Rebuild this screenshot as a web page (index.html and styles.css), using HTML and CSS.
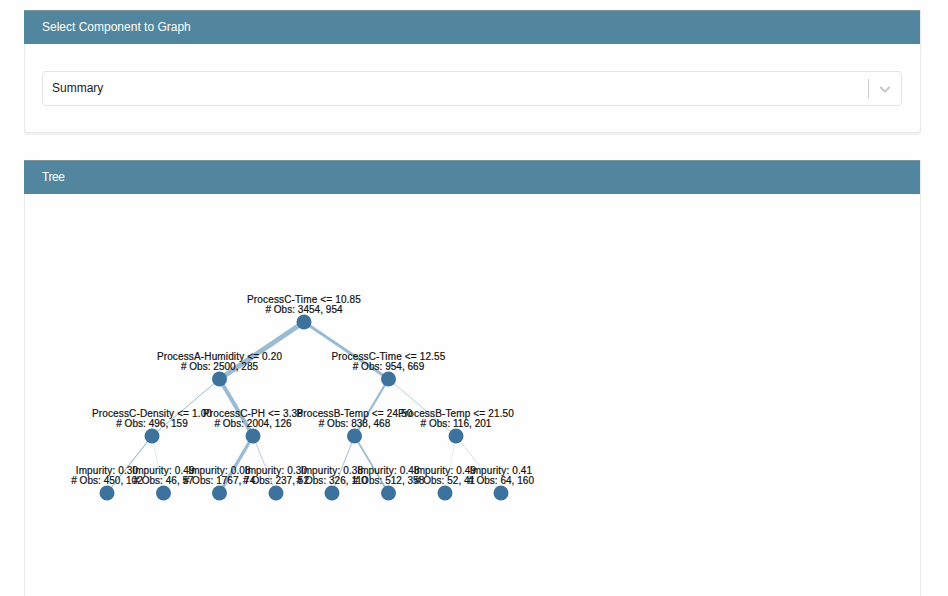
FILE: index.html
```html
<!DOCTYPE html>
<html lang="en">
<head>
<meta charset="utf-8">
<title>Tree</title>
<link rel="stylesheet" href="styles.css">
</head>
<body>
<main class="page">
  <section class="card select-card">
    <header class="card-header">Select Component to Graph</header>
    <div class="card-body">
      <div class="select">
        <span class="select-value">Summary</span>
        <span class="select-separator"></span>
        <span class="select-indicator">
          <svg width="18" height="18" viewBox="0 0 20 20"><path d="M4.516 7.548c0.436-0.446 1.043-0.481 1.576 0l3.908 3.747 3.908-3.747c0.533-0.481 1.141-0.446 1.574 0 0.436 0.445 0.408 1.197 0 1.615-0.406 0.418-4.695 4.502-4.695 4.502-0.217 0.223-0.502 0.335-0.787 0.335s-0.57-0.112-0.789-0.335c0 0-4.287-4.084-4.695-4.502s-0.436-1.17 0-1.615z"/></svg>
        </span>
      </div>
    </div>
  </section>
  <section class="card tree-card">
    <header class="card-header tree-header">Tree</header>
    <svg class="tree" width="895" height="402" viewBox="25 194 895 402">
      <g class="links">
        <path d="M304 322L219.5 379" stroke-width="5"/>
        <path d="M304 322L388.5 379" stroke-width="3"/>
        <path d="M219.5 379L152 436" stroke-width="1"/>
        <path d="M219.5 379L253 436" stroke-width="4"/>
        <path d="M388.5 379L354.5 436" stroke-width="2.3"/>
        <path d="M388.5 379L456 436" stroke-width=".7"/>
        <path d="M152 436L107 493" stroke-width="1.1"/>
        <path d="M152 436L163.5 493" stroke-width=".3"/>
        <path d="M253 436L219.5 493" stroke-width="3.4"/>
        <path d="M253 436L276 493" stroke-width=".7"/>
        <path d="M354.5 436L332 493" stroke-width=".9"/>
        <path d="M354.5 436L388.5 493" stroke-width="1.7"/>
        <path class="dotted" d="M456 436L445 493" stroke-width=".4"/>
        <path class="dotted" d="M456 436L501 493" stroke-width=".6"/>
      </g>
      <g class="nodes">
        <circle cx="304" cy="322" r="7.5"/>
        <circle cx="219.5" cy="379" r="7.5"/><circle cx="388.5" cy="379" r="7.5"/>
        <circle cx="152" cy="436" r="7.5"/><circle cx="253" cy="436" r="7.5"/><circle cx="354.5" cy="436" r="7.5"/><circle cx="456" cy="436" r="7.5"/>
        <circle cx="107" cy="493" r="7.5"/><circle cx="163.5" cy="493" r="7.5"/><circle cx="219.5" cy="493" r="7.5"/><circle cx="276" cy="493" r="7.5"/><circle cx="332" cy="493" r="7.5"/><circle cx="388.5" cy="493" r="7.5"/><circle cx="445" cy="493" r="7.5"/><circle cx="501" cy="493" r="7.5"/>
      </g>
      <g class="labels rule">
        <text x="304" y="303">ProcessC-Time &lt;= 10.85</text>
        <text x="219.5" y="360">ProcessA-Humidity &lt;= 0.20</text>
        <text x="388.5" y="360">ProcessC-Time &lt;= 12.55</text>
        <text x="152" y="417">ProcessC-Density &lt;= 1.00</text>
        <text x="253" y="417">ProcessC-PH &lt;= 3.38</text>
        <text x="354.5" y="417">ProcessB-Temp &lt;= 24.50</text>
        <text x="456" y="417">ProcessB-Temp &lt;= 21.50</text>
        <text x="107" y="474">Impurity: 0.30</text>
        <text x="163.5" y="474">Impurity: 0.49</text>
        <text x="219.5" y="474">Impurity: 0.08</text>
        <text x="276" y="474">Impurity: 0.30</text>
        <text x="332" y="474">Impurity: 0.38</text>
        <text x="388.5" y="474">Impurity: 0.48</text>
        <text x="445" y="474">Impurity: 0.49</text>
        <text x="501" y="474">Impurity: 0.41</text>
      </g>
      <g class="labels count">
        <text x="304" y="313"># Obs: 3454, 954</text>
        <text x="219.5" y="370"># Obs: 2500, 285</text>
        <text x="388.5" y="370"># Obs: 954, 669</text>
        <text x="152" y="427"># Obs: 496, 159</text>
        <text x="253" y="427"># Obs: 2004, 126</text>
        <text x="354.5" y="427"># Obs: 838, 468</text>
        <text x="456" y="427"># Obs: 116, 201</text>
        <text x="107" y="484"># Obs: 450, 102</text>
        <text x="163.5" y="484"># Obs: 46, 57</text>
        <text x="219.5" y="484"># Obs: 1767, 74</text>
        <text x="276" y="484"># Obs: 237, 52</text>
        <text x="332" y="484"># Obs: 326, 110</text>
        <text x="388.5" y="484"># Obs: 512, 358</text>
        <text x="445" y="484"># Obs: 52, 41</text>
        <text x="501" y="484"># Obs: 64, 160</text>
      </g>
    </svg>
  </section>
</main>
</body>
</html>
```
FILE: styles.css
```css
* { box-sizing: border-box; }
html, body { margin: 0; height: 100%; overflow: hidden; }
body {
  background: #fefefe;
  color: #222;
  font: 12px/16px "Liberation Sans", Arial, sans-serif;
}
.page {
  display: flex;
  flex-direction: column;
  gap: 27px;
  height: 596px;
  padding: 10px 27px 0 24px;
  overflow: hidden;
}
.card {
  flex: none;
  border: 1px solid #e6eaec;
  border-top: 0;
  border-radius: 0 0 3px 3px;
  background: #fefefe;
  box-shadow: 0 2px 0 #f1f1f1;
}
.select-card { height: 123px; }
.tree-card { height: 460px; }
.card-header {
  height: 34px;
  margin: 0 0 0 -1px;
  padding: 8px 18px 0;
  border-top: 1px solid #7e929b;
  background: #51869e;
  color: #fff;
}
.tree-header { letter-spacing: -.4px; }
.card-body { padding: 27px 18px 0 17px; }
.select {
  display: flex;
  align-items: center;
  height: 35px;
  border: 1px solid #e5e5e5;
  border-radius: 4px;
}
.select-value { flex: 1; padding: 0 0 1px 9px; }
.select-separator { width: 1px; height: 19px; background: #ccc; }
.select-indicator { display: flex; justify-content: center; width: 32px; }
.select-indicator svg { fill: #c8c8c8; }
.tree { display: block; }
.links path { fill: none; stroke: #9abbd2; }
.links .dotted { stroke-dasharray: 2 1; }
.nodes circle { fill: #3c729b; }
.labels text {
  fill: #111;
  stroke: #111;
  stroke-width: .2px;
  font-size: 10px;
  text-anchor: middle;
}
.rule text { letter-spacing: .14px; }
.count text { letter-spacing: .03px; }
```
